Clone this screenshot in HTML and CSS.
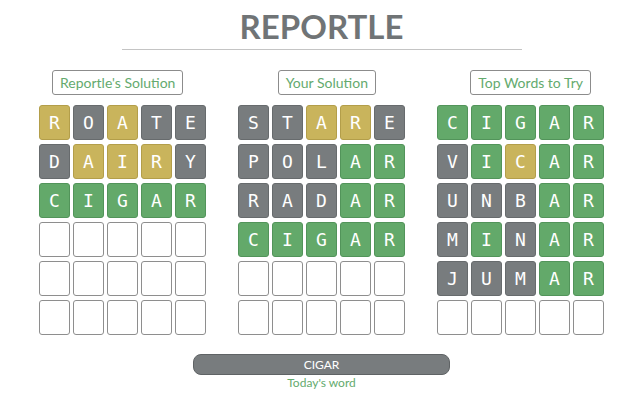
FILE: index.html
```html
<!DOCTYPE html>
<html>
<head>
<meta charset="utf-8">
<link rel="stylesheet" href="styles.css">
</head>
<body>
<div class="page">
  <header class="header">
    <h1 class="title">REPORTLE</h1>
    <div class="rule"></div>
  </header>
  <div class="labels">
    <div class="label">Reportle's Solution</div>
    <div class="label">Your Solution</div>
    <div class="label">Top Words to Try</div>
  </div>
  <div class="boards">
    <div class="board">
      <div class="t y">R</div><div class="t g">O</div><div class="t y">A</div><div class="t g">T</div><div class="t g">E</div>
      <div class="t g">D</div><div class="t y">A</div><div class="t y">I</div><div class="t y">R</div><div class="t g">Y</div>
      <div class="t c">C</div><div class="t c">I</div><div class="t c">G</div><div class="t c">A</div><div class="t c">R</div>
      <div class="t"></div><div class="t"></div><div class="t"></div><div class="t"></div><div class="t"></div>
      <div class="t"></div><div class="t"></div><div class="t"></div><div class="t"></div><div class="t"></div>
      <div class="t"></div><div class="t"></div><div class="t"></div><div class="t"></div><div class="t"></div>
    </div>
    <div class="board">
      <div class="t g">S</div><div class="t g">T</div><div class="t y">A</div><div class="t y">R</div><div class="t g">E</div>
      <div class="t g">P</div><div class="t g">O</div><div class="t g">L</div><div class="t c">A</div><div class="t c">R</div>
      <div class="t g">R</div><div class="t g">A</div><div class="t g">D</div><div class="t c">A</div><div class="t c">R</div>
      <div class="t c">C</div><div class="t c">I</div><div class="t c">G</div><div class="t c">A</div><div class="t c">R</div>
      <div class="t"></div><div class="t"></div><div class="t"></div><div class="t"></div><div class="t"></div>
      <div class="t"></div><div class="t"></div><div class="t"></div><div class="t"></div><div class="t"></div>
    </div>
    <div class="board">
      <div class="t c">C</div><div class="t c">I</div><div class="t c">G</div><div class="t c">A</div><div class="t c">R</div>
      <div class="t g">V</div><div class="t c">I</div><div class="t y">C</div><div class="t c">A</div><div class="t c">R</div>
      <div class="t g">U</div><div class="t g">N</div><div class="t g">B</div><div class="t c">A</div><div class="t c">R</div>
      <div class="t g">M</div><div class="t c">I</div><div class="t g">N</div><div class="t c">A</div><div class="t c">R</div>
      <div class="t g">J</div><div class="t g">U</div><div class="t g">M</div><div class="t c">A</div><div class="t c">R</div>
      <div class="t"></div><div class="t"></div><div class="t"></div><div class="t"></div><div class="t"></div>
    </div>
  </div>
  <div class="answer">
    <div class="answer-bar">CIGAR</div>
    <div class="answer-caption">Today's word</div>
  </div>
</div>
</body>
</html>
```

FILE: styles.css
```css
html, body {
  margin: 0;
  padding: 0;
  background: #ffffff;
}

.page {
  box-sizing: border-box;
  width: 640px;
  padding-left: 3px;
  font-family: Lato, "Open Sans", sans-serif;
}

.header {
  padding-top: 6px;
  display: flex;
  flex-direction: column;
  align-items: center;
}

.title {
  margin: 0;
  font-size: 33px;
  line-height: 40px;
  font-weight: 700;
  color: #707476;
}

.rule {
  margin-top: 3px;
  width: 400px;
  height: 1px;
  background: #c4c4c4;
}

.labels {
  width: 539px;
  margin: 20px auto 0;
  display: flex;
  justify-content: space-between;
}

.label {
  border: 1px solid #8c8c8c;
  border-radius: 3px;
  padding: 0 7px;
  font-size: 14px;
  line-height: 23px;
  color: #64aa6e;
}

.boards {
  width: 565px;
  margin: 10px auto 0;
  display: flex;
  justify-content: space-between;
}

.board {
  display: grid;
  grid-template-columns: repeat(5, 31px);
  grid-auto-rows: 35px;
  column-gap: 3px;
  row-gap: 4px;
}

.t {
  box-sizing: border-box;
  border: 1px solid #8e8e8e;
  border-radius: 3px;
  background: #ffffff;
  display: flex;
  align-items: center;
  justify-content: center;
  font-family: "DejaVu Sans Mono", monospace;
  font-size: 18px;
  color: #ffffff;
}

.t.g {
  background: #787c7e;
  border-color: #676b6d;
}

.t.y {
  background: #c9b45c;
  border-color: #b39e4a;
}

.t.c {
  background: #63a96a;
  border-color: #52945a;
}

.answer {
  margin-top: 19px;
  display: flex;
  flex-direction: column;
  align-items: center;
}

.answer-bar {
  box-sizing: border-box;
  width: 257px;
  height: 21px;
  border: 1px solid #5f6365;
  border-radius: 8px;
  background: #787c7e;
  color: #ffffff;
  font-size: 12px;
  line-height: 19px;
  text-align: center;
}

.answer-caption {
  margin-top: 1px;
  font-size: 12px;
  line-height: 14px;
  color: #64aa6e;
}
```
